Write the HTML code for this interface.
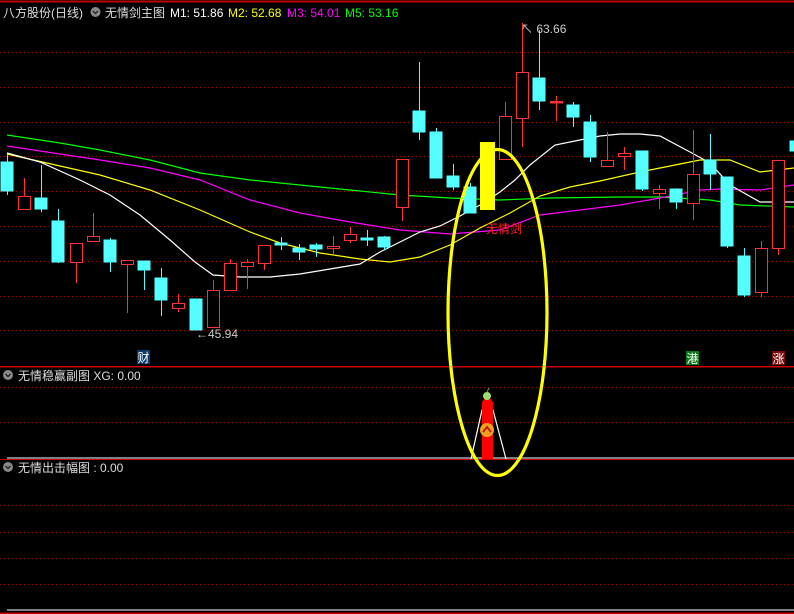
<!DOCTYPE html>
<html><head><meta charset="utf-8"><style>
body{margin:0;background:#000;width:794px;height:614px;overflow:hidden;font-family:"Liberation Sans","Noto Sans CJK SC",sans-serif}
svg{position:absolute;left:0;top:0}
.t{font-family:"Liberation Sans","Noto Sans CJK SC",sans-serif;font-size:12px}
</style></head><body>
<svg width="794" height="614" viewBox="0 0 794 614" shape-rendering="crispEdges">
<rect width="794" height="614" fill="#000"/>
<line x1="0" y1="1.5" x2="794" y2="1.5" stroke="#b00" stroke-width="2"/>
<g stroke="#a00000" stroke-width="1" stroke-dasharray="1 3">
<line x1="0" y1="52.5" x2="794" y2="52.5"/><line x1="0" y1="87.5" x2="794" y2="87.5"/><line x1="0" y1="122.5" x2="794" y2="122.5"/><line x1="0" y1="156.5" x2="794" y2="156.5"/><line x1="0" y1="191.5" x2="794" y2="191.5"/><line x1="0" y1="226.5" x2="794" y2="226.5"/><line x1="0" y1="261.5" x2="794" y2="261.5"/><line x1="0" y1="296.5" x2="794" y2="296.5"/><line x1="0" y1="330.5" x2="794" y2="330.5"/>
<line x1="0" y1="387.5" x2="794" y2="387.5"/><line x1="0" y1="422.5" x2="794" y2="422.5"/>
<line x1="0" y1="505.5" x2="794" y2="505.5"/><line x1="0" y1="532.5" x2="794" y2="532.5"/><line x1="0" y1="558.5" x2="794" y2="558.5"/><line x1="0" y1="584.5" x2="794" y2="584.5"/>
</g>
<line x1="0" y1="366.5" x2="794" y2="366.5" stroke="#c00" stroke-width="1.5"/>
<line x1="7" y1="458" x2="794" y2="458" stroke="#fff" stroke-width="1"/>
<line x1="0" y1="459.5" x2="794" y2="459.5" stroke="#c00"/>
<line x1="7" y1="610" x2="794" y2="610" stroke="#fff"/>
<line x1="0" y1="613" x2="794" y2="613" stroke="#c00" stroke-width="1.5"/>

<!-- MAs -->
<g fill="none" stroke-width="1.2" shape-rendering="auto">
<polyline stroke="#00ff00" points="7,135 60,143 100,150 150,160 200,173 250,180 300,185 350,190 400,195 450,198 500,200 550,198 620,197 660,197 710,200 740,205 794,207"/>
<polyline stroke="#ff00ff" points="7,146 60,154 100,160 150,168 200,180 250,200 300,213 350,222 400,230 450,234 500,230 540,215 580,210 620,205 660,198 700,190 720,189 760,190 794,185"/>
<polyline stroke="#ffff00" points="7,154 60,166 100,175 150,190 200,210 250,232 280,243 320,253 360,259 390,262 420,257 450,245 480,228 510,213 540,196 570,187 600,181 640,172 680,164 700,160 730,160 760,172 794,168"/>
<polyline stroke="#ffffff" points="7,153 40,162 80,180 110,195 140,215 170,240 195,262 213,275 240,277 270,277 300,274 330,269 360,264 380,252 400,242 420,232 440,226 460,216 480,205 500,192 515,180 530,165 555,145 580,140 600,136 620,134 640,134 660,136 690,152 710,163 730,185 760,202 794,202"/>
</g>

<!-- candles cyan -->
<g stroke="#54ffff" fill="#54ffff">
<line x1="7.5" y1="155" x2="7.5" y2="195"/><rect x="1" y="162" width="12" height="29"/>
<line x1="41.5" y1="165" x2="41.5" y2="212"/><rect x="35" y="198" width="12" height="11"/>
<line x1="58.5" y1="209" x2="58.5" y2="263"/><rect x="52" y="221" width="12" height="41"/>
<line x1="110.5" y1="238" x2="110.5" y2="272"/><rect x="104" y="240" width="12" height="22"/>
<line x1="144.5" y1="261" x2="144.5" y2="290"/><rect x="138" y="261" width="12" height="9"/>
<line x1="161.5" y1="268" x2="161.5" y2="316"/><rect x="155" y="278" width="12" height="22"/>
<rect x="190" y="299" width="12" height="31"/>
<line x1="281.5" y1="237" x2="281.5" y2="250"/><rect x="275" y="243" width="12" height="2"/>
<line x1="299.5" y1="244" x2="299.5" y2="260"/><rect x="293" y="248" width="12" height="4"/>
<line x1="316.5" y1="243" x2="316.5" y2="257"/><rect x="310" y="245" width="12" height="4"/>
<line x1="367.5" y1="230" x2="367.5" y2="246"/><rect x="361" y="238" width="12" height="2"/>
<line x1="384.5" y1="236" x2="384.5" y2="250"/><rect x="378" y="237" width="12" height="10"/>
<line x1="419.5" y1="62" x2="419.5" y2="140"/><rect x="413" y="111" width="12" height="21"/>
<line x1="436.5" y1="128" x2="436.5" y2="178"/><rect x="430" y="132" width="12" height="46"/>
<line x1="453.5" y1="164" x2="453.5" y2="190"/><rect x="447" y="176" width="12" height="11"/>
<line x1="470.5" y1="183" x2="470.5" y2="213"/><rect x="464" y="187" width="12" height="26"/>
<line x1="539.5" y1="30" x2="539.5" y2="110"/><rect x="533" y="78" width="12" height="23"/>
<line x1="573.5" y1="102" x2="573.5" y2="127"/><rect x="567" y="105" width="12" height="12"/>
<line x1="590.5" y1="115" x2="590.5" y2="162"/><rect x="584" y="122" width="12" height="35"/>
<line x1="642.5" y1="151" x2="642.5" y2="191"/><rect x="636" y="151" width="12" height="38"/>
<line x1="676.5" y1="189" x2="676.5" y2="209"/><rect x="670" y="189" width="12" height="13"/>
<line x1="710.5" y1="134" x2="710.5" y2="190"/><rect x="704" y="160" width="12" height="14"/>
<line x1="727.5" y1="177" x2="727.5" y2="248"/><rect x="721" y="177" width="12" height="69"/>
<line x1="744.5" y1="248" x2="744.5" y2="297"/><rect x="738" y="256" width="12" height="39"/>
<rect x="790" y="141" width="6" height="10"/>
</g>
<!-- candles red hollow -->
<g stroke="#ff3232" fill="#000" stroke-width="1.3">
<line x1="24.5" y1="178" x2="24.5" y2="196"/><rect x="18.5" y="196.5" width="12" height="13"/>
<line x1="76.5" y1="262" x2="76.5" y2="283"/><rect x="70.5" y="243.5" width="12" height="19"/>
<line x1="93.5" y1="213" x2="93.5" y2="236"/><rect x="87.5" y="236.5" width="12" height="5"/>
<line x1="127.5" y1="264" x2="127.5" y2="313"/><rect x="121.5" y="260.5" width="12" height="4"/>
<line x1="178.5" y1="294" x2="178.5" y2="312"/><rect x="172.5" y="303.5" width="12" height="5"/>
<line x1="213.5" y1="280" x2="213.5" y2="290"/><rect x="207.5" y="290.5" width="12" height="37"/>
<line x1="230.5" y1="259" x2="230.5" y2="263"/><rect x="224.5" y="263.5" width="12" height="27"/>
<line x1="247.5" y1="259" x2="247.5" y2="289"/><rect x="241.5" y="262.5" width="12" height="4"/>
<line x1="264.5" y1="263" x2="264.5" y2="270"/><rect x="258.5" y="245.5" width="12" height="18"/>
<line x1="333.5" y1="236" x2="333.5" y2="254"/><rect x="327.5" y="246.5" width="12" height="2"/>
<line x1="350.5" y1="227" x2="350.5" y2="243"/><rect x="344.5" y="234.5" width="12" height="6"/>
<line x1="402.5" y1="207" x2="402.5" y2="221"/><rect x="396.5" y="159.5" width="12" height="48"/>
<line x1="505.5" y1="102" x2="505.5" y2="116"/><rect x="499.5" y="116.5" width="12" height="43"/>
<line x1="522.5" y1="23" x2="522.5" y2="72"/><line x1="522.5" y1="118" x2="522.5" y2="147"/><rect x="516.5" y="72.5" width="12" height="46"/>
<line x1="556.5" y1="96" x2="556.5" y2="121"/><rect x="550.5" y="101.5" width="12" height="1.5" fill="#ff3232"/>
<line x1="607.5" y1="132" x2="607.5" y2="160"/><rect x="601.5" y="160.5" width="12" height="6"/>
<line x1="624.5" y1="147" x2="624.5" y2="170"/><rect x="618.5" y="153.5" width="12" height="3"/>
<line x1="659.5" y1="185" x2="659.5" y2="209"/><rect x="653.5" y="189.5" width="12" height="4"/>
<line x1="693.5" y1="130" x2="693.5" y2="220"/><rect x="687.5" y="174.5" width="12" height="29"/>
<line x1="761.5" y1="241" x2="761.5" y2="297"/><rect x="755.5" y="248.5" width="12" height="44"/>
<line x1="778.5" y1="248" x2="778.5" y2="255"/><rect x="772.5" y="160.5" width="12" height="88"/>
</g>
<rect x="480" y="142" width="15" height="68" fill="#ffff00"/>

<!-- sub panel -->
<polyline points="471,459 482,410 493,410 506,459" fill="none" stroke="#fff" stroke-width="1.2" shape-rendering="auto"/>
<path d="M482,459 V402 Q487,393 493,402 V459 Z" fill="#ff0000" shape-rendering="auto"/>
<circle cx="487" cy="396" r="4" fill="#9fdc6a" shape-rendering="auto"/>
<line x1="487" y1="392" x2="489" y2="388" stroke="#6a4" stroke-width="1"/>
<circle cx="487" cy="430" r="7" fill="#f0a020" shape-rendering="auto"/>
<path d="M483,432 L487,427 L491,432" fill="none" stroke="#c02000" stroke-width="2" shape-rendering="auto"/>

<ellipse cx="497.5" cy="312.5" rx="49.5" ry="163" fill="none" stroke="#ffff00" stroke-width="3.2" shape-rendering="auto"/>

<!-- text -->
<text x="3" y="17" class="t" fill="#ddd" font-size="13">八方股份(日线)</text>
<circle cx="95.5" cy="12" r="5" fill="#888" shape-rendering="auto"/><path d="M93,11 L95.5,13.5 L98,11" stroke="#222" fill="none" stroke-width="1.3" shape-rendering="auto"/>
<text x="105" y="17" class="t" fill="#ddd" font-size="13">无情剑主图</text>
<text x="170" y="17" class="t" fill="#fff">M1: 51.86</text>
<text x="228" y="17" class="t" fill="#ffff00">M2: 52.68</text>
<text x="287" y="17" class="t" fill="#ff00ff">M3: 54.01</text>
<text x="345" y="17" class="t" fill="#00ff00">M5: 53.16</text>

<circle cx="8" cy="375" r="5" fill="#888" shape-rendering="auto"/><path d="M5.5,374 L8,376.5 L10.5,374" stroke="#222" fill="none" stroke-width="1.3" shape-rendering="auto"/>
<text x="18" y="380" class="t" fill="#ddd">无情稳赢副图  XG: 0.00</text>
<circle cx="8" cy="467" r="5" fill="#888" shape-rendering="auto"/><path d="M5.5,466 L8,468.5 L10.5,466" stroke="#222" fill="none" stroke-width="1.3" shape-rendering="auto"/>
<text x="18" y="472" class="t" fill="#ddd">无情出击幅图 : 0.00</text>

<rect x="137" y="350" width="13" height="14" fill="#0a3a6a"/><text x="137.5" y="362" class="t" fill="#fff">财</text>
<rect x="686" y="351" width="13" height="14" fill="#0a7a1a"/><text x="686.5" y="363" class="t" fill="#fff">港</text>
<rect x="772" y="351" width="13" height="14" fill="#7a0a0a"/><text x="772.5" y="363" class="t" fill="#fff">涨</text>

<text x="486" y="233" class="t" fill="#ff2020" font-size="13">无情剑</text>
<text x="196" y="338" class="t" fill="#ccc">←45.94</text>
<text x="521" y="33" class="t" fill="#ccc">↖ 63.66</text>
</svg>
</body></html>
